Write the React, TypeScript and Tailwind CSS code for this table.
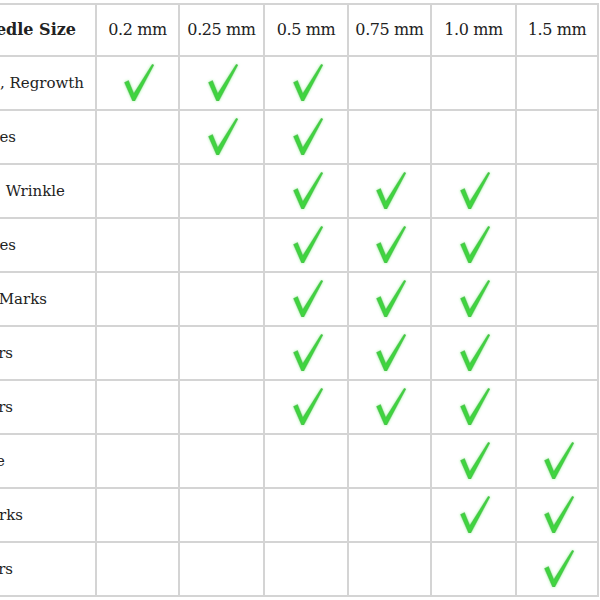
import React from 'react';

const sizes = ['0.2 mm', '0.25 mm', '0.5 mm', '0.75 mm', '1.0 mm', '1.5 mm'];

// label, right padding for the (cropped) first column, checked columns
const rows: { label: string; pad: string; checks: number[] }[] = [
  { label: 'Hair Loss, Regrowth', pad: 'pr-[11px]', checks: [0, 1, 2] },
  { label: 'Fine Lines', pad: 'pr-[79px]', checks: [1, 2] },
  { label: 'Deep    Wrinkle', pad: 'pr-[30px]', checks: [2, 3, 4] },
  { label: 'Large Pores', pad: 'pr-[79px]', checks: [2, 3, 4] },
  { label: 'Stretch Marks', pad: 'pr-[48px]', checks: [2, 3, 4] },
  { label: 'Acne Scars', pad: 'pr-[82px]', checks: [2, 3, 4] },
  { label: 'Surgical Scars', pad: 'pr-[82px]', checks: [2, 3, 4] },
  { label: 'Cellulite', pad: 'pr-[90px]', checks: [4, 5] },
  { label: 'Old Stretch Marks', pad: 'pr-[72px]', checks: [4, 5] },
  { label: 'Deep Scars', pad: 'pr-[82px]', checks: [5] },
];

function Check() {
  return (
    <svg width="30" height="37" viewBox="0 0 30 37" className="drop-shadow-[0_0_1.5px_#9af79a]">
      <polygon
        points="0.5,18.5 4.5,16.5 9.8,29.5 28.2,0.3 29.9,1 10.8,37 8.6,37"
        fill="#3fd43f"
        stroke="#5aa55a"
        strokeWidth="0.4"
        strokeLinejoin="round"
      />
    </svg>
  );
}

const cols = 'grid grid-cols-[97px_83px_85px_84px_83px_85px_82px]';

export default function App() {
  return (
    <div className="w-[600px] h-[600px] bg-white overflow-hidden text-[#222] font-['DejaVu_Serif',serif] text-[15px]">
      <div className="mt-[3px] w-[599px] border-t-2 border-[#d4d4d4]">
        {/* header */}
        <div className={`${cols} h-[52px]`}>
          <div className="flex items-center justify-end pr-[19px] border-r-2 border-b-2 border-[#d4d4d4] whitespace-nowrap font-bold text-[16px]">
            <span>Needle Size</span>
          </div>
          {sizes.map((s) => (
            <div
              key={s}
              className="flex items-center justify-center border-r-2 border-b-2 border-[#d4d4d4] whitespace-nowrap text-[16px] tracking-[-0.4px]"
            >
              {s}
            </div>
          ))}
        </div>

        {rows.map((row) => (
          <div key={row.label} className={`${cols} h-[54px]`}>
            <div
              className={`flex items-center justify-end ${row.pad} border-r-2 border-b-2 border-[#d4d4d4] whitespace-pre`}
            >
              <span>{row.label}</span>
            </div>
            {sizes.map((s, i) => (
              <div
                key={s}
                className="flex items-center justify-center pl-[3px] pb-[2px] border-r-2 border-b-2 border-[#d4d4d4]"
              >
                {row.checks.includes(i) && <Check />}
              </div>
            ))}
          </div>
        ))}
      </div>
    </div>
  );
}
